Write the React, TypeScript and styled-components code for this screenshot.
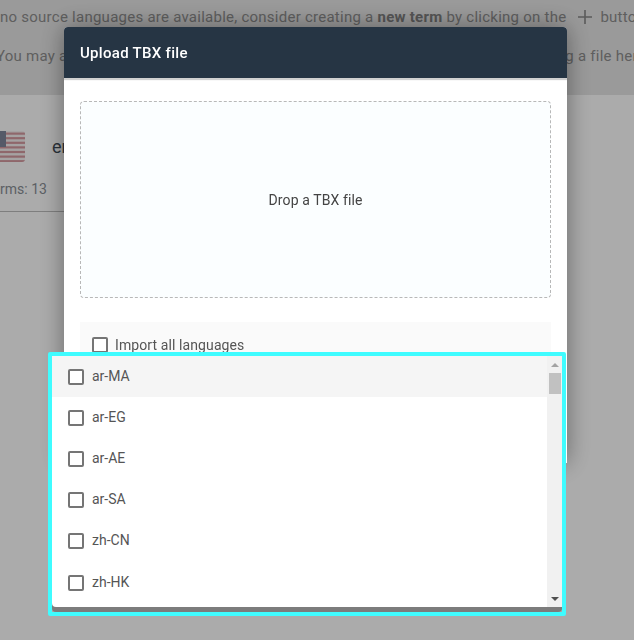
import React from "react";
import styled, { createGlobalStyle } from "styled-components";

const languages = ["ar-MA", "ar-EG", "ar-AE", "ar-SA", "zh-CN", "zh-HK"];

const GlobalStyle = createGlobalStyle`
	html, body {
		margin: 0;
		padding: 0;
		height: 100%;
		overflow: hidden;
		background: #ffffff;
		font-family: Roboto, "Liberation Sans", sans-serif;
	}
`;

const UsFlag = () => (
	<svg width="37" height="31" viewBox="0 0 37 31">
		<defs>
			<clipPath id="flag-corners">
				<rect width="37" height="31" rx="3" />
			</clipPath>
		</defs>
		<g clipPath="url(#flag-corners)">
			<rect width="37" height="31" fill="#f6f2f2" />
			{[0, 1, 2, 3, 4, 5, 6].map((i) => (
				<rect key={i} y={1.5 + i * 4.6} width="37" height="2.2" fill="#d59aa0" />
			))}
			<rect width="18" height="16" fill="#7f869c" />
		</g>
	</svg>
);

const PlusIcon = () => (
	<svg width="14" height="14" viewBox="0 0 14 14">
		<path d="M7 0v14M0 7h14" stroke="#888" strokeWidth="1.6" fill="none" />
	</svg>
);

export default function App() {
	return (
		<>
			<GlobalStyle />
			<Page>
				<Intro>
					<IntroLine>
						no source languages are available, consider creating a <b>new term</b> by clicking on the
						<PlusSlot>
							<PlusIcon />
						</PlusSlot>
						button
					</IntroLine>
					<IntroLineSecond>You may also upload an existing TBX dictionary to this list by dragging and dropping a file here</IntroLineSecond>
				</Intro>
				<CardRow>
					<FlagSlot>
						<UsFlag />
					</FlagSlot>
					<LangName>en-US</LangName>
				</CardRow>
				<TermCount>Terms: 13</TermCount>
				<CardRule />
			</Page>
			<Overlay />
			<Modal>
				<ModalHeader>Upload TBX file</ModalHeader>
				<ModalBody>
					<DropZone>Drop a TBX file</DropZone>
					<ImportPanel>
						<Box />
						<ImportLabel>Import all languages</ImportLabel>
					</ImportPanel>
				</ModalBody>
			</Modal>
			<Highlight>
				<List>
					<Options>
						{languages.map((lang, i) => (
							<Option key={lang} $active={i === 0}>
								<Box />
								<OptionLabel>{lang}</OptionLabel>
							</Option>
						))}
					</Options>
					<Scrollbar>
						<ArrowUp />
						<Thumb />
						<ArrowDown />
					</Scrollbar>
				</List>
			</Highlight>
		</>
	);
}

const Page = styled.div`
	width: 634px;
	height: 640px;
	overflow: hidden;
`;

const Intro = styled.div`
	height: 95px;
	background: #e6e6e6;
	padding-top: 7px;
	box-sizing: border-box;
	font-size: 15px;
	letter-spacing: 0.25px;
	white-space: nowrap;
	color: #8e8e8e;

	b {
		color: #808080;
	}
`;

const IntroLine = styled.div`
	line-height: 20px;
`;

const IntroLineSecond = styled.div`
	line-height: 20px;
	margin-top: 19px;
	margin-left: -4px;
`;

const PlusSlot = styled.span`
	display: inline-block;
	margin: 0 8px 0 12px;
	vertical-align: -2px;
	line-height: 0;
`;

const CardRow = styled.div`
	display: flex;
	align-items: center;
	margin-top: 36px;
	margin-left: -12px;
`;

const FlagSlot = styled.div`
	line-height: 0;
`;

const LangName = styled.div`
	margin-left: 27px;
	font-size: 18px;
	color: #3f4c58;
`;

const TermCount = styled.div`
	margin-top: 19px;
	margin-left: -15px;
	font-size: 14px;
	color: #8a9096;
`;

const CardRule = styled.div`
	margin-top: 14px;
	width: 70px;
	height: 1px;
	background: #bdbdbd;
`;

const Overlay = styled.div`
	position: fixed;
	inset: 0;
	background: rgba(0, 0, 0, 0.33);
`;

const Modal = styled.div`
	position: fixed;
	left: 64px;
	top: 27px;
	width: 503px;
	height: 436px;
	display: flex;
	flex-direction: column;
	background: #ffffff;
	border-radius: 4px 4px 0 0;
	box-shadow: 0 0 24px rgba(0, 0, 0, 0.4);
	overflow: hidden;
`;

const ModalHeader = styled.div`
	height: 51px;
	flex: none;
	display: flex;
	align-items: center;
	padding-left: 16px;
	background: #263544;
	color: #ffffff;
	font-size: 15px;
	font-weight: 500;
	letter-spacing: 0.3px;
	box-shadow: 0 2px 1px rgba(0, 0, 0, 0.18);
`;

const ModalBody = styled.div`
	padding: 23px 16px 0;
	display: flex;
	flex-direction: column;
	gap: 24px;
`;

const DropZone = styled.div`
	height: 197px;
	box-sizing: border-box;
	display: flex;
	align-items: center;
	justify-content: center;
	background: #fbfeff;
	border: 1px dashed #b8b8b8;
	border-radius: 4px;
	font-size: 14px;
	color: #444;
	letter-spacing: 0.1px;
`;

const ImportPanel = styled.div`
	height: 60px;
	display: flex;
	align-items: flex-start;
	gap: 7px;
	padding: 15px 12px;
	box-sizing: border-box;
	background: #fafafa;
`;

const ImportLabel = styled.span`
	font-size: 14px;
	line-height: 16px;
	color: #555;
	letter-spacing: 0.1px;
`;

const Box = styled.span`
	flex: none;
	width: 16px;
	height: 16px;
	box-sizing: border-box;
	border: 2px solid #757575;
	border-radius: 2px;
	background: #ffffff;
`;

const Highlight = styled.div`
	position: fixed;
	left: 48px;
	top: 352px;
	width: 518px;
	height: 264px;
	box-sizing: border-box;
	border: 4px solid #3ffcff;
	border-radius: 2px;
`;

const List = styled.div`
	height: 251px;
	display: flex;
	background: #ffffff;
	border-radius: 0 0 4px 4px;
	box-shadow: 0 5px 0 #7c7c7c;
`;

const Options = styled.div`
	flex: 1;
`;

const Option = styled.div<{ $active?: boolean }>`
	height: 41.2px;
	display: flex;
	align-items: center;
	gap: 8px;
	padding-left: 16px;
	background: ${(p) => (p.$active ? "#f5f5f5" : "#ffffff")};
`;

const OptionLabel = styled.span`
	font-size: 14px;
	color: #555;
	padding-bottom: 2px;
`;

const Scrollbar = styled.div`
	flex: none;
	width: 15px;
	display: flex;
	flex-direction: column;
	align-items: center;
	background: #f1f1f1;
	padding-top: 7px;
	box-sizing: border-box;
`;

const ArrowUp = styled.span`
	width: 0;
	height: 0;
	border-left: 4px solid transparent;
	border-right: 4px solid transparent;
	border-bottom: 4px solid #a3a3a3;
`;

const Thumb = styled.span`
	margin-top: 6px;
	align-self: flex-start;
	margin-left: 2px;
	width: 12px;
	height: 21px;
	background: #c1c1c1;
`;

const ArrowDown = styled.span`
	margin-top: auto;
	margin-bottom: 6px;
	width: 0;
	height: 0;
	border-left: 4px solid transparent;
	border-right: 4px solid transparent;
	border-top: 4px solid #505050;
`;
